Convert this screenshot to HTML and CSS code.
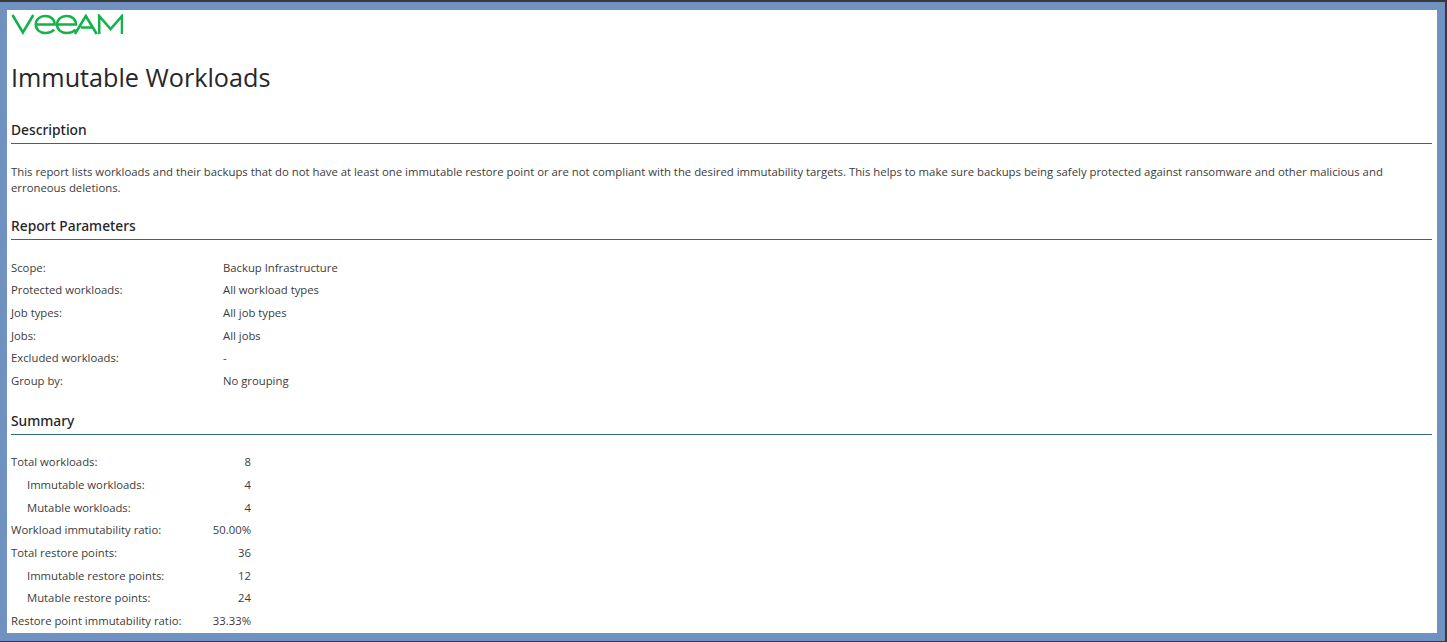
FILE: index.html
```html
<!DOCTYPE html>
<html lang="en">
<head>
<meta charset="utf-8">
<title>Immutable Workloads</title>
<link rel="stylesheet" href="styles.css">
</head>
<body>
<div class="window">
  <main class="report">
    <svg class="logo" viewBox="0 0 113 21" preserveAspectRatio="none" role="img" aria-label="Veeam logo">
      <g fill="none" stroke="#13b24a" stroke-width="2.6">
        <path d="M1.500 1 L12 18.500 L22.500 1"/>
        <path d="M25 10.500 H44 C44 5 40 2 34.500 2 C29 2 25 5.500 25 10.500 C25 15.500 29 19 34.500 19 C38.500 19 41.500 18 43.500 15.500"/>
        <path d="M46.500 10.500 H65.500 C65.500 5 61.500 2 56 2 C50.500 2 46.500 5.500 46.500 10.500 C46.500 15.500 50.500 19 56 19 C60 19 63 18 65 15.500"/>
        <path d="M64.500 20 L75.500 2 L86.500 20 M70.500 13.500 H82"/>
        <path d="M89 20 V2 L100.500 15 L112 2 V20"/>
      </g>
    </svg>
    <h1 class="title">Immutable Workloads</h1>

    <h2 class="section-head">Description</h2>
    <p class="desc">This report lists workloads and their backups that do not have at least one immutable restore point or are not compliant with the desired immutability targets. This helps to make sure backups being safely protected against ransomware and other malicious and erroneous deletions.</p>

    <h2 class="section-head">Report Parameters</h2>
    <dl class="params">
      <div class="row"><dt>Scope:</dt><dd>Backup Infrastructure</dd></div>
      <div class="row"><dt>Protected workloads:</dt><dd>All workload types</dd></div>
      <div class="row"><dt>Job types:</dt><dd>All job types</dd></div>
      <div class="row"><dt>Jobs:</dt><dd>All jobs</dd></div>
      <div class="row"><dt>Excluded workloads:</dt><dd>-</dd></div>
      <div class="row"><dt>Group by:</dt><dd>No grouping</dd></div>
    </dl>

    <h2 class="section-head">Summary</h2>
    <dl class="summary">
      <div class="row"><dt>Total workloads:</dt><dd>8</dd></div>
      <div class="row sub"><dt>Immutable workloads:</dt><dd>4</dd></div>
      <div class="row sub"><dt>Mutable workloads:</dt><dd>4</dd></div>
      <div class="row"><dt>Workload immutability ratio:</dt><dd>50.00%</dd></div>
      <div class="row"><dt>Total restore points:</dt><dd>36</dd></div>
      <div class="row sub"><dt>Immutable restore points:</dt><dd>12</dd></div>
      <div class="row sub"><dt>Mutable restore points:</dt><dd>24</dd></div>
      <div class="row"><dt>Restore point immutability ratio:</dt><dd>33.33%</dd></div>
    </dl>
  </main>
</div>
</body>
</html>
```
FILE: styles.css
```css
* { box-sizing: border-box; }
html, body { margin: 0; height: 100%; overflow: hidden; }
body {
  background: #3a3a3c;
  padding: 2px 2px 1px 0;
  font-family: "Open Sans", "Noto Sans", sans-serif;
  color: #3c3c3c;
}
.window {
  height: 100%;
  background: #6f92c0;
  padding: 8px 8px 8px 7px;
}
.report {
  height: 100%;
  background: #fff;
  padding: 4px 5px 0 4px;
  overflow: hidden;
}
.logo { display: block; width: 112px; height: 21px; }
.title {
  margin: 25px 0 0;
  font-size: 25.2px;
  line-height: 34px;
  font-weight: 400;
  color: #26262b;
}
.section-head {
  margin: 26px 0 0;
  padding: 0 0 3px;
  font-family: "Noto Sans", "Open Sans", sans-serif;
  font-size: 13.8px;
  line-height: 20px;
  font-weight: 500;
  color: #26262b;
  border-bottom: 1px solid #2f6a80;
}
.desc {
  margin: 20px 0 0;
  font-size: 11.35px;
  line-height: 16px;
}
.desc + .section-head { margin-top: 20px; }
.params { margin: 15.7px 0 0; }
.params + .section-head { margin-top: 19.1px; }
.summary { margin: 15.5px 0 0; }
.row { display: flex; height: 22.7px; align-items: center; font-size: 11.3px; }
dt { margin: 0; }
dd { margin: 0; }
.params dt { width: 212px; }
.summary dt { width: 200px; }
.summary dd { width: 40px; text-align: right; }
.sub dt { padding-left: 16px; }
```
